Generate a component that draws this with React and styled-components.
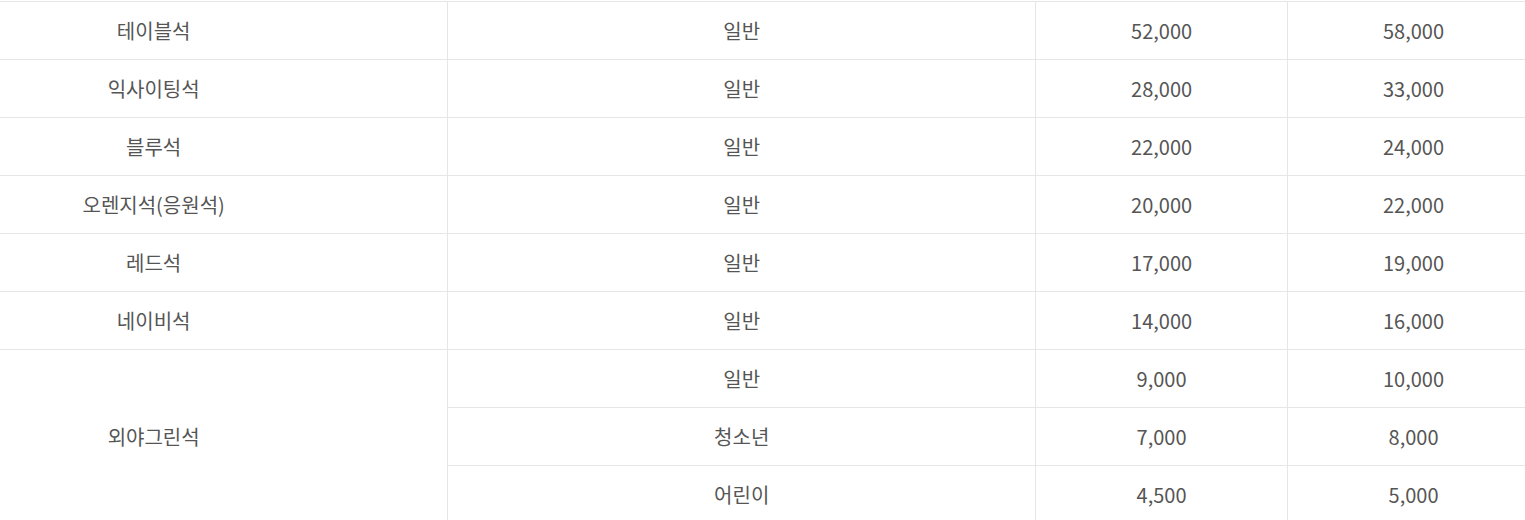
import React from "react";
import styled, { createGlobalStyle } from "styled-components";

const GlobalStyle = createGlobalStyle`
  html, body {
    margin: 0;
    padding: 0;
    background: #fff;
    overflow: hidden;
  }
  body {
    font-family: "Noto Sans CJK KR", "Noto Sans", sans-serif;
  }
`;

const Wrapper = styled.div`
  padding-top: 1px;
  margin-left: -140px;
  width: 1680px;
`;

const PriceTable = styled.table`
  width: 100%;
  border-collapse: collapse;
  table-layout: fixed;
  border-top: 1px solid #e6e6e6;
`;

const Cell = styled.td`
  height: 57px;
  padding: 0;
  text-align: center;
  vertical-align: middle;
  font-size: 20px;
  line-height: 1;
  color: #555;
  border-bottom: 1px solid #e6e6e6;
  border-right: 1px solid #e6e6e6;
`;

const rows = [
  { seat: "테이블석", type: "일반", adult: "52,000", weekend: "58,000" },
  { seat: "익사이팅석", type: "일반", adult: "28,000", weekend: "33,000" },
  { seat: "블루석", type: "일반", adult: "22,000", weekend: "24,000" },
  { seat: "오렌지석(응원석)", type: "일반", adult: "20,000", weekend: "22,000" },
  { seat: "레드석", type: "일반", adult: "17,000", weekend: "19,000" },
  { seat: "네이비석", type: "일반", adult: "14,000", weekend: "16,000" },
];

const outfield = [
  { type: "일반", adult: "9,000", weekend: "10,000" },
  { type: "청소년", adult: "7,000", weekend: "8,000" },
  { type: "어린이", adult: "4,500", weekend: "5,000" },
];

export default function App() {
  return (
    <>
      <GlobalStyle />
      <Wrapper>
        <PriceTable>
          <colgroup>
            <col style={{ width: "35%" }} />
            <col style={{ width: "35%" }} />
            <col style={{ width: "15%" }} />
            <col style={{ width: "15%" }} />
          </colgroup>
          <tbody>
            {rows.map((r) => (
              <tr key={r.seat}>
                <Cell>{r.seat}</Cell>
                <Cell>{r.type}</Cell>
                <Cell>{r.adult}</Cell>
                <Cell>{r.weekend}</Cell>
              </tr>
            ))}
            {outfield.map((r, i) => (
              <tr key={r.type}>
                {i === 0 && <Cell rowSpan={3}>외야그린석</Cell>}
                <Cell>{r.type}</Cell>
                <Cell>{r.adult}</Cell>
                <Cell>{r.weekend}</Cell>
              </tr>
            ))}
          </tbody>
        </PriceTable>
      </Wrapper>
    </>
  );
}
